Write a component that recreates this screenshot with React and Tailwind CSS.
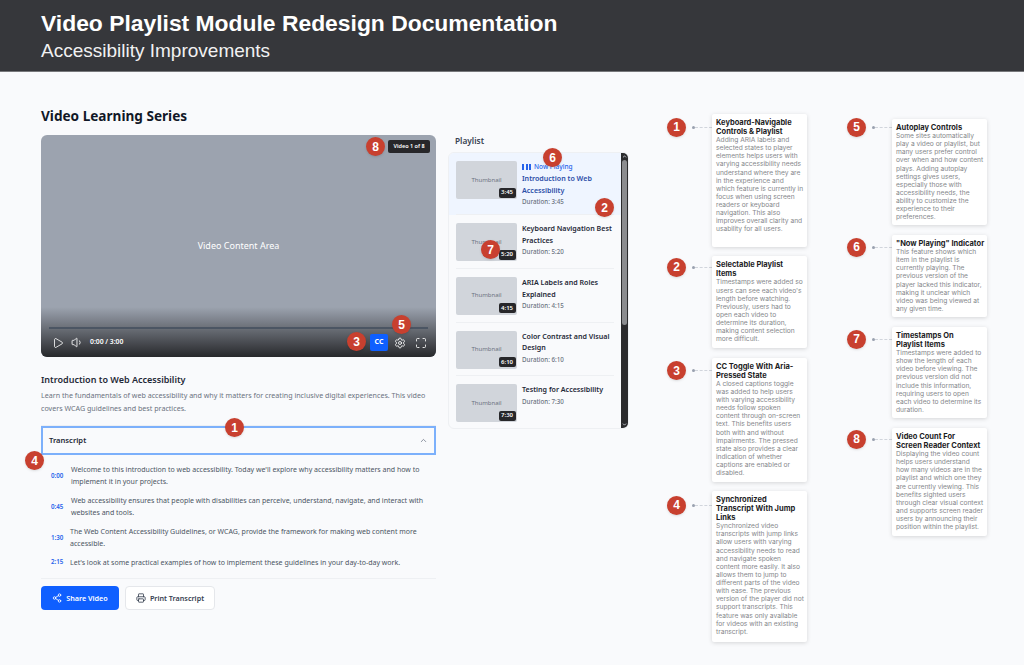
import React from 'react';
import { Play, Volume1, Settings, Maximize, ChevronUp, Share2, Printer, ChevronDown } from 'lucide-react';

const playlist = [
  { title: 'Introduction to Web Accessibility', time: '3:45', active: true },
  { title: 'Keyboard Navigation Best Practices', time: '5:20' },
  { title: 'ARIA Labels and Roles Explained', time: '4:15' },
  { title: 'Color Contrast and Visual Design', time: '6:10' },
  { title: 'Testing for Accessibility', time: '7:30' },
];

const transcript = [
  { time: '0:00', text: "Welcome to this introduction to web accessibility. Today we'll explore why accessibility matters and how to implement it in your projects.", w: 'w-[20px]' },
  { time: '0:45', text: 'Web accessibility ensures that people with disabilities can perceive, understand, navigate, and interact with websites and tools.', w: 'w-[20px]' },
  { time: '1:30', text: 'The Web Content Accessibility Guidelines, or WCAG, provide the framework for making web content more accessible.', w: 'w-[19px]' },
  { time: '2:15', text: "Let's look at some practical examples of how to implement these guidelines in your day-to-day work.", w: 'w-[19px]' },
];

const leftNotes = [
  { n: 1, h: 'h-[133px]', mt: 'mt-[3.5px]', title: 'Keyboard-Navigable\nControls & Playlist', text: 'Adding ARIA labels and selected states to player elements helps users with varying accessibility needs understand where they are in the experience and which feature is currently in focus when using screen readers or keyboard navigation. This also improves overall clarity and usability for all users.' },
  { n: 2, h: 'h-[92px]', mt: 'mt-[1.5px]', title: 'Selectable Playlist\nItems', text: "Timestamps were added so users can see each video's length before watching. Previously, users had to open each video to determine its duration, making content selection more difficult." },
  { n: 3, h: 'h-[124px]', mt: 'mt-[3.5px]', title: 'CC Toggle With Aria-\nPressed State', text: 'A closed captions toggle was added to help users with varying accessibility needs follow spoken content through on-screen text. This benefits users both with and without impairments. The pressed state also provides a clear indication of whether captions are enabled or disabled.' },
  { n: 4, h: 'h-[151px]', mt: 'mt-[4.5px]', title: 'Synchronized\nTranscript With Jump\nLinks', text: 'Synchronized video transcripts with jump links allow users with varying accessibility needs to read and navigate spoken content more easily. It also allows them to jump to different parts of the video with ease. The previous version of the player did not support transcripts. This feature was only available for videos with an existing transcript.' },
];

const rightNotes = [
  { n: 5, h: 'h-[106px]', mt: '-mt-[1.5px]', title: 'Autoplay Controls', text: 'Some sites automatically play a video or playlist, but many users prefer control over when and how content plays. Adding autoplay settings gives users, especially those with accessibility needs, the ability to customize the experience to their preferences.' },
  { n: 6, h: 'h-[82px]', mt: 'mt-[2.5px]', title: '"Now Playing" Indicator', text: 'This feature shows which item in the playlist is currently playing. The previous version of the player lacked this indicator, making it unclear which video was being viewed at any given time.' },
  { n: 7, h: 'h-[91px]', mt: 'mt-[2.5px]', title: 'Timestamps On\nPlaylist Items', text: 'Timestamps were added to show the length of each video before viewing. The previous version did not include this information, requiring users to open each video to determine its duration.' },
  { n: 8, h: 'h-[108px]', mt: 'mt-[1.5px]', title: 'Video Count For\nScreen Reader Context', text: 'Displaying the video count helps users understand how many videos are in the playlist and which one they are currently viewing. This benefits sighted users through clear visual context and supports screen reader users by announcing their position within the playlist.' },
];

function Badge({ n, className = '' }) {
  return (
    <div className={`w-[19px] h-[19px] rounded-full bg-[#c8402f] text-white text-[12px] font-bold flex items-center justify-center font-['Liberation_Sans',sans-serif] shadow-sm ${className}`}>
      {n}
    </div>
  );
}

function Note({ n, h, mt, title, text }) {
  return (
    <div className="flex items-start">
      <div className={`flex items-center shrink-0 ${mt}`}>
        <Badge n={n} className="shrink-0" />
        <div className="w-[26px] shrink-0 flex items-center pl-[6px]">
          <span className="w-[3px] h-[3px] rounded-full bg-gray-400 shrink-0" />
          <span className="flex-1 border-t border-dashed border-gray-300" />
        </div>
      </div>
      <div className={`w-[95px] ${h} bg-white rounded-[2px] shadow-[0_1px_4px_rgba(0,0,0,0.15)] pl-1 pr-[3px] py-[4px] overflow-hidden font-['Inter',sans-serif]`}>
        <h3 className="text-[7.5px] leading-[9px] font-bold text-[#1c1c1e] whitespace-pre">{title}</h3>
        <p className="text-[6.65px] leading-[8.13px] text-[#85878b]">{text}</p>
      </div>
    </div>
  );
}

export default function App() {
  return (
    <div className="relative w-[1024px] h-[665px] overflow-hidden bg-[#f9fafc] font-['Noto_Sans',sans-serif]">
      {/* Header */}
      <header className="h-[72px] bg-[#36373b] border-b border-[#77787b] pl-[41px] pt-[9px] font-['Liberation_Sans',sans-serif] text-white">
        <h1 className="text-[22.87px] leading-[28px] font-bold">Video Playlist Module Redesign Documentation</h1>
        <p className="text-[19px] leading-[27px] text-[#f1f1f2]">Accessibility Improvements</p>
      </header>

      <div className="flex pl-[41px] pt-[35px]">
        {/* Player column */}
        <main className="w-[395px] shrink-0">
          <h2 className="text-[13.6px] leading-[18px] font-bold text-[#111827]">Video Learning Series</h2>

          <div className="relative mt-[10px] h-[222px] rounded-md bg-[#9ca3af] overflow-hidden flex items-center justify-center">
            <span className="text-[9px] text-white">Video Content Area</span>
            <div className="absolute right-[6px] top-[5px] h-[13px] w-[42px] rounded-[2px] bg-[#27272a] text-white text-[5.5px] font-semibold flex items-center justify-center">Video 1 of 8</div>
            <div className="absolute inset-x-0 bottom-0 h-[50px] bg-gradient-to-b from-transparent to-[#27282b] px-[8px]">
              <div className="mt-[20px] h-[2px] bg-[#4b5563]" />
              <div className="flex items-center mt-[5px] h-[17px] text-white">
                <Play size={12} strokeWidth={1.6} className="ml-[3px]" />
                <Volume1 size={13} strokeWidth={1.6} className="ml-[7px]" />
                <span className="ml-[6px] text-[6.8px] font-semibold">0:00 / 3:00</span>
                <div className="ml-auto w-[18px] h-[17px] rounded-[2px] bg-[#0f5fff] flex items-center justify-center text-[7px] font-bold">CC</div>
                <Settings size={12} strokeWidth={1.7} className="ml-[6px]" />
                <Maximize size={12} strokeWidth={1.7} className="ml-[9px] mr-px" />
              </div>
            </div>
          </div>

          <h3 className="mt-[17px] text-[9px] leading-[12px] font-semibold text-[#1f2937]">Introduction to Web Accessibility</h3>
          <p className="mt-[3px] text-[7.13px] leading-[12.5px] text-[#6b7280]">Learn the fundamentals of web accessibility and why it matters for creating inclusive digital experiences. This video covers WCAG guidelines and best practices.</p>

          <div className="mt-[11px] h-px bg-[#eef0f3]" />
          <div className="h-[29px] border-2 border-[#7cb0fb] flex items-center justify-between pl-[6px] pr-[6px] text-[#1f2937]">
            <span className="text-[7.6px] font-semibold">Transcript</span>
            <ChevronUp size={9} className="text-gray-500" />
          </div>

          <div className="pl-[10px] pt-[8px] border-b border-[#eef0f3] pb-[10px] flex flex-col gap-[6.4px]">
            {transcript.map((line) => (
              <div key={line.time} className="flex items-center">
                <span className={`${line.w} shrink-0 text-[6.2px] font-semibold text-[#2563eb]`}>{line.time}</span>
                <p className="text-[7.02px] leading-[12.3px] text-[#4b5563]">{line.text}</p>
              </div>
            ))}
          </div>

          <div className="flex gap-[6px] mt-[7px]">
            <button className="w-[78px] h-[24px] rounded-[4px] bg-[#0f5fff] text-white text-[7.2px] font-semibold flex items-center justify-center gap-1">
              <Share2 size={10} /> Share Video
            </button>
            <button className="w-[90px] h-[24px] rounded-[4px] bg-white border border-[#e5e7eb] text-[#374151] text-[7.2px] font-semibold flex items-center justify-center gap-1">
              <Printer size={10} /> Print Transcript
            </button>
          </div>
        </main>

        {/* Playlist */}
        <section className="w-[181px] shrink-0 ml-[12px] mt-[27px]">
          <h3 className="ml-[7px] text-[8.3px] leading-[13px] font-semibold text-[#374151]">Playlist</h3>
          <div className="relative mt-[5px] h-[277px] rounded-md border border-[#eef0f3] overflow-hidden pr-[7px]">
            <div>
              {playlist.map((item) => (
                <div key={item.title} className={`pl-[7px] pr-[7px] ${item.active ? 'bg-[#eff5ff]' : ''}`}>
                  <div className={`flex gap-[5px] pt-[8px] ${item.title === 'Testing for Accessibility' ? '' : 'border-b border-[#eef0f3]'} ${item.active ? 'h-[62px]' : 'h-[53.8px]'}`}>
                    <div className="relative w-[61px] h-[38px] shrink-0 rounded-[2px] bg-[#d1d5db] flex items-center justify-center text-[6px] text-[#6b7280]">
                      Thumbnail
                      <span className="absolute right-[1.5px] bottom-[1.5px] h-[10px] px-[2.5px] rounded-[2px] bg-[#27272a] text-white text-[6px] font-semibold flex items-center">{item.time}</span>
                    </div>
                    <div className={`min-w-0 ${item.active ? 'mt-[2px]' : ''}`}>
                      {item.active && (
                        <div className="flex items-center gap-[3px] text-[6.5px] leading-[8px] text-[#2563eb] font-medium mb-[2px]">
                          <span className="flex gap-[1.5px]">
                            <span className="w-[2px] h-[6px] bg-[#2563eb]" />
                            <span className="w-[2px] h-[6px] bg-[#2563eb]" />
                            <span className="w-[2px] h-[6px] bg-[#2563eb]" />
                          </span>
                          Now Playing
                        </div>
                      )}
                      <div className={`text-[7.1px] leading-[11.7px] font-semibold ${item.active ? 'text-[#2b4ea8]' : 'text-[#1f2937]'}`}>{item.title}</div>
                      <div className="text-[6.2px] leading-[10px] mt-px font-medium text-[#6b7280]">Duration: {item.time}</div>
                    </div>
                  </div>
                </div>
              ))}
            </div>
            {/* Scrollbar */}
            <div className="absolute right-0 inset-y-0 w-[7px] bg-[#2b2b2d] flex flex-col items-center justify-between py-px">
              <ChevronUp size={5} strokeWidth={4} className="text-gray-300" />
              <div className="absolute top-[7px] left-[1px] w-[5px] h-[165px] rounded-full bg-[#8b8c8f]" />
              <ChevronDown size={5} strokeWidth={4} className="text-gray-300" />
            </div>
          </div>
        </section>

        {/* Annotation columns */}
        <aside className="flex flex-col gap-[9.4px] ml-[38px] mt-[7px] w-[140px] shrink-0">
          {leftNotes.map((note) => <Note key={note.n} {...note} />)}
        </aside>
        <aside className="flex flex-col gap-[10px] ml-[40px] mt-[12px] w-[140px] shrink-0">
          {rightNotes.map((note) => <Note key={note.n} {...note} />)}
        </aside>
      </div>

      {/* Numbered markers over the screenshot */}
      <Badge n={8} className="absolute left-[366px] top-[137px]" />
      <Badge n={6} className="absolute left-[543px] top-[148px]" />
      <Badge n={2} className="absolute left-[595px] top-[198px]" />
      <Badge n={7} className="absolute left-[481px] top-[240px]" />
      <Badge n={5} className="absolute left-[392px] top-[315px]" />
      <Badge n={3} className="absolute left-[347px] top-[332px]" />
      <Badge n={1} className="absolute left-[225px] top-[418px]" />
      <Badge n={4} className="absolute left-[25px] top-[451px]" />
    </div>
  );
}
